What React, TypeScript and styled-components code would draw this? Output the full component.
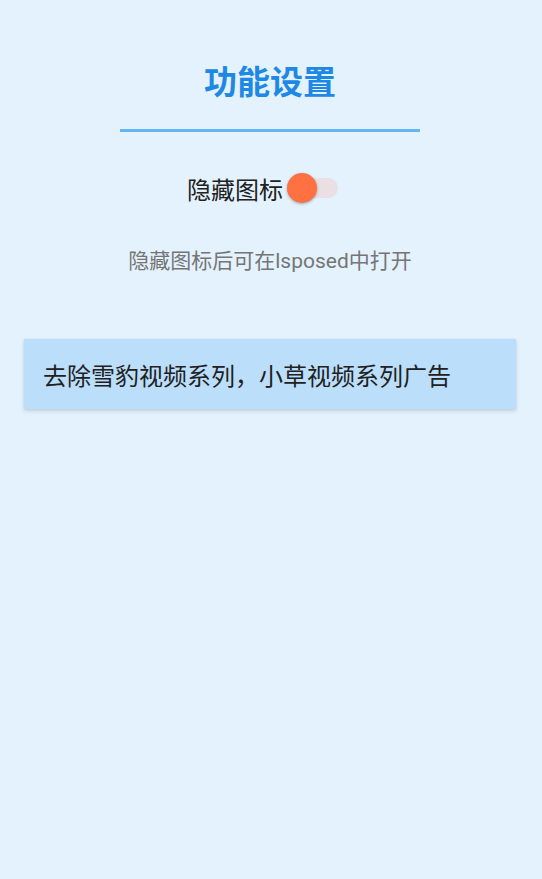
import React, { useState } from 'react';
import styled, { createGlobalStyle } from 'styled-components';

const GlobalStyle = createGlobalStyle`
  html, body {
    margin: 0;
    padding: 0;
    background: #e3f2fd;
  }
  body {
    font-family: Roboto, "Noto Sans CJK SC", sans-serif;
    min-height: 879px;
  }
`;

const Page = styled.div`
  display: flex;
  flex-direction: column;
  align-items: center;
  padding: 0 26px 0 24px;
  min-height: 879px;
  box-sizing: border-box;
`;

const Title = styled.h1`
  margin: 63px 0 0;
  font-size: 33px;
  line-height: 40px;
  font-weight: 700;
  color: #1e88e5;
`;

const Divider = styled.div`
  width: 300px;
  height: 3px;
  margin-top: 26px;
  background: #64b5f6;
`;

const ToggleRow = styled.label`
  display: flex;
  align-items: center;
  gap: 7px;
  margin-top: 41px;
  height: 30px;
  font-size: 24px;
  color: #212121;
  cursor: pointer;
`;

const Track = styled.span<{ $on: boolean }>`
  position: relative;
  display: inline-block;
  width: 48px;
  height: 20px;
  margin-right: 15px;
  border-radius: 10px;
  background: ${(p) => (p.$on ? '#ffab91' : '#eadfe3')};
`;

const Thumb = styled.span<{ $on: boolean }>`
  position: absolute;
  top: -5px;
  left: ${(p) => (p.$on ? '21px' : '-3px')};
  width: 30px;
  height: 30px;
  border-radius: 50%;
  background: #ff7043;
  box-shadow: 0 1px 3px rgba(0, 0, 0, 0.3);
`;

const Hint = styled.p`
  margin: 46px 0 0;
  font-size: 21px;
  line-height: 24px;
  color: #757575;
`;

const Card = styled.div`
  align-self: stretch;
  display: flex;
  align-items: center;
  height: 70px;
  margin-top: 66px;
  padding: 0 19px;
  background: #bbdefb;
  box-shadow: 0 2px 4px rgba(0, 0, 0, 0.14), 0 0 2px rgba(0, 0, 0, 0.05);
  font-size: 24px;
  color: #212121;
`;

export default function App(): JSX.Element {
  const [hidden, setHidden] = useState<boolean>(false);

  return (
    <>
      <GlobalStyle />
      <Page>
        <Title>功能设置</Title>
        <Divider />
        <ToggleRow onClick={() => setHidden(!hidden)}>
          隐藏图标
          <Track $on={hidden}>
            <Thumb $on={hidden} />
          </Track>
        </ToggleRow>
        <Hint>隐藏图标后可在lsposed中打开</Hint>
        <Card>去除雪豹视频系列，小草视频系列广告</Card>
      </Page>
    </>
  );
}
